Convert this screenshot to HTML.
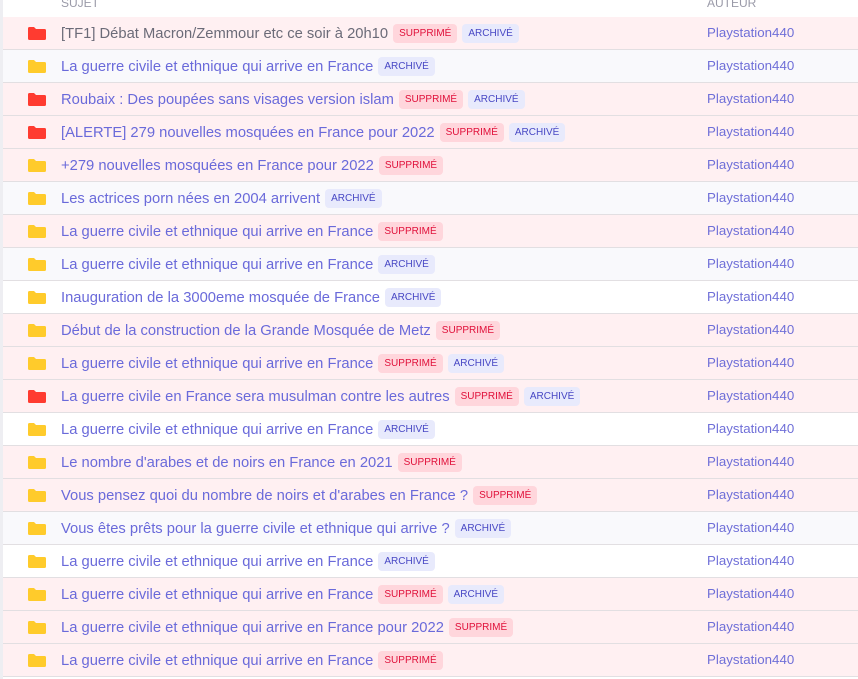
<!DOCTYPE html>
<html><head><meta charset="utf-8"><style>
*{margin:0;padding:0;box-sizing:border-box}
body{width:858px;height:679px;overflow:hidden;background:#fff;font-family:"Liberation Sans",sans-serif;position:relative}
.lb{position:absolute;left:0;top:0;width:3px;height:679px;background:#eeeef2}
.hd{position:absolute;top:-6px;height:23px;left:3px;right:0;font-size:12px;color:#9a9aa8;text-transform:uppercase}
.hd span{position:absolute;top:2px}
.row{position:absolute;left:3px;right:0;height:33px;border-bottom:1px solid #e2dfe2;font-size:14.75px}
.p{background:#fff0f2}.g{background:#f9f9fc}.w{background:#fff}
.f{position:absolute;left:25px;top:10px;width:18px;height:13px}
.t{position:absolute;left:58px;top:7px;white-space:nowrap;color:#6a6ada;display:flex;align-items:center}
.t.v{color:#6b6b78}
.b{display:inline-block;font-size:10px;height:19px;line-height:19px;padding:0 6px;border-radius:4px;margin-left:5px}
.s{background:#ffd6dc;color:#e0103a}.a{background:#e8eafc;color:#4747c4}
.au{position:absolute;left:704px;top:8px;color:#6f6fd8;font-size:13.3px}
</style></head><body>
<div class="lb"></div>
<div class="hd"><span style="left:58px">Sujet</span><span style="left:704px">Auteur</span></div>
<div id="c"></div>
<script>
var R=[["[TF1] Débat Macron/Zemmour etc ce soir à 20h10",1,1,1,1],
["La guerre civile et ethnique qui arrive en France",0,1,0],
["Roubaix : Des poupées sans visages version islam",1,1,1],
["[ALERTE] 279 nouvelles mosquées en France pour 2022",1,1,1],
["+279 nouvelles mosquées en France pour 2022",1,0,0],
["Les actrices porn nées en 2004 arrivent",0,1,0],
["La guerre civile et ethnique qui arrive en France",1,0,0],
["La guerre civile et ethnique qui arrive en France",0,1,0],
["Inauguration de la 3000eme mosquée de France",0,1,0],
["Début de la construction de la Grande Mosquée de Metz",1,0,0],
["La guerre civile et ethnique qui arrive en France",1,1,0],
["La guerre civile en France sera musulman contre les autres",1,1,1],
["La guerre civile et ethnique qui arrive en France",0,1,0],
["Le nombre d'arabes et de noirs en France en 2021",1,0,0],
["Vous pensez quoi du nombre de noirs et d'arabes en France ?",1,0,0],
["Vous êtes prêts pour la guerre civile et ethnique qui arrive ?",0,1,0],
["La guerre civile et ethnique qui arrive en France",0,1,0],
["La guerre civile et ethnique qui arrive en France",1,1,0],
["La guerre civile et ethnique qui arrive en France pour 2022",1,0,0],
["La guerre civile et ethnique qui arrive en France",1,0,0]];
var h="";
R.forEach(function(r,i){
var cls=r[1]?"p":(i%2==1?"g":"w");
var col=r[3]?"#ff3b30":"#ffcb2b";
h+='<div class="row '+cls+'" style="top:'+(17+i*33)+'px"><svg class="f" viewBox="0 0 18 13"><path d="M0 1.5Q0 0 1.5 0H6L8 2H16.5Q18 2 18 3.5V11.5Q18 13 16.5 13H1.5Q0 13 0 11.5Z" fill="'+col+'"/></svg><div class="t'+(r[4]?' v':'')+'">'+r[0]+(r[1]?'<span class="b s">SUPPRIMÉ</span>':'')+(r[2]?'<span class="b a">ARCHIVÉ</span>':'')+'</div><div class="au">Playstation440</div></div>';});
document.getElementById("c").innerHTML=h;
</script>
</body></html>
